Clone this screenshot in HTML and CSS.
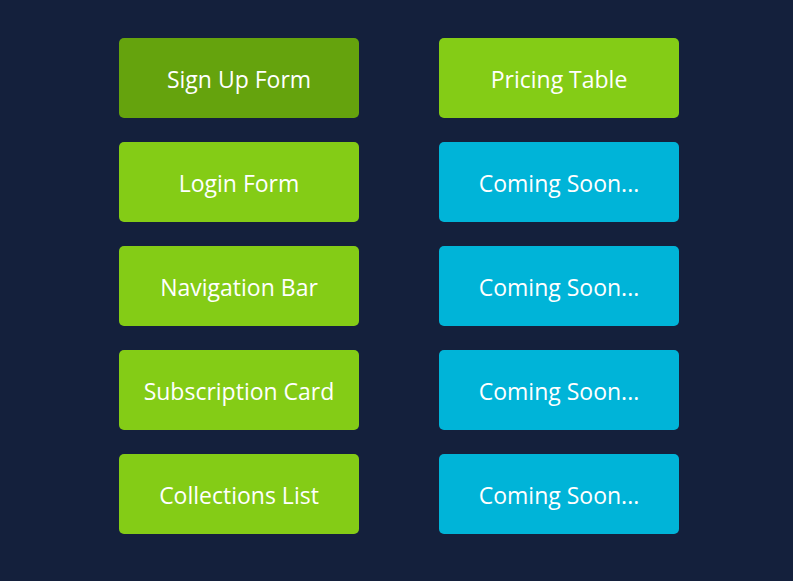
FILE: index.html
```html
<!DOCTYPE html>
<html>
<head>
<meta charset="utf-8">
<link rel="stylesheet" href="styles.css">
</head>
<body>
<div class="grid">
  <a class="tile tile-active">Sign Up Form</a>
  <a class="tile tile-green">Pricing Table</a>
  <a class="tile tile-green">Login Form</a>
  <a class="tile tile-soon">Coming Soon...</a>
  <a class="tile tile-green">Navigation Bar</a>
  <a class="tile tile-soon">Coming Soon...</a>
  <a class="tile tile-green">Subscription Card</a>
  <a class="tile tile-soon">Coming Soon...</a>
  <a class="tile tile-green">Collections List</a>
  <a class="tile tile-soon">Coming Soon...</a>
</div>
</body>
</html>
```
FILE: styles.css
```css
html, body {
  margin: 0;
  padding: 0;
  background: #14203c;
  height: 100%;
}
body {
  font-family: "Open Sans", "Noto Sans", sans-serif;
}
.grid {
  display: grid;
  grid-template-columns: 240px 240px;
  grid-auto-rows: 80px;
  column-gap: 80px;
  row-gap: 24px;
  padding: 38px 0 0 119px;
}
.tile {
  display: flex;
  align-items: center;
  justify-content: center;
  padding-top: 1px;
  box-sizing: border-box;
  border-radius: 5px;
  color: #ffffff;
  font-size: 23px;
  text-decoration: none;
}
.tile-active { background: #65a30d; }
.tile-green { background: #84cc16; }
.tile-soon { background: #00b4d8; }
```
